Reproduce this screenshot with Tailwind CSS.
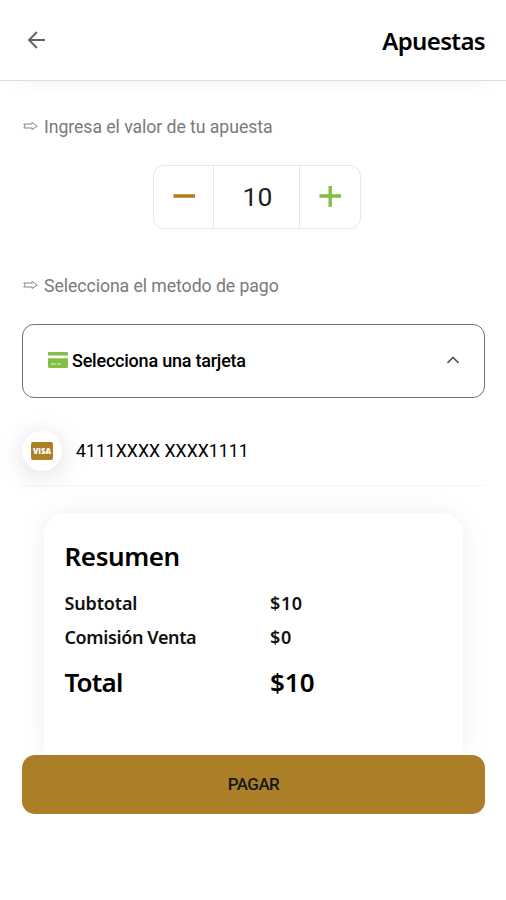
<!DOCTYPE html>
<html lang="es">
<head>
<meta charset="utf-8">
<title>Apuestas</title>
<script src="https://cdn.jsdelivr.net/npm/@tailwindcss/browser@4"></script>
</head>
<body class="bg-white">
<div class="w-[506px] h-[900px] overflow-hidden flex flex-col bg-white font-['Roboto',sans-serif] text-black">
  <header class="relative z-10 h-[81px] shrink-0 bg-white border-b border-[#dedede] flex items-center justify-between pl-[27px] pr-[21px] shadow-[0_14px_22px_-20px_rgba(0,0,0,0.12)]">
    <svg class="w-5 h-5" viewBox="0 0 20 20" fill="none" stroke="#626262" stroke-width="1.9"><path d="M18 10H2.500M10 2L2 10l8 8"/></svg>
    <h1 class="font-['Noto_Sans',sans-serif] font-semibold text-[24px] leading-8 tracking-[-0.650px] pt-px">Apuestas</h1>
  </header>
  <main class="px-[22px] flex flex-col">
    <div class="mt-[34px] h-6 flex items-center text-[17.700px] text-[#7a7a7a] whitespace-nowrap">
      <svg class="w-[15px] h-[12px] ml-px mr-[6px]" viewBox="0 0 15 12" fill="none" stroke="#858585" stroke-width="1" stroke-linejoin="round"><path d="M.7 3h8.300V1.500L14.200 5.200 9 8.500V7H.7l1-1.200V4z"/></svg>
      <span class="tracking-[-0.070px]">Ingresa el valor de tu apuesta</span>
    </div>
    <div class="mt-[26px] ml-[131px] w-[208px] h-[64px] flex border border-[#e8e8e8] rounded-[11px]">
      <div class="w-[60px] flex items-center justify-center border-r border-[#e8e8e8]"><svg class="w-[22px] h-[22px]" viewBox="0 0 22 22" fill="none" stroke="#b07a12" stroke-width="3.400"><path d="M.5 10h21.500"/></svg></div>
      <div class="w-[86px] flex items-center justify-center border-r border-[#e8e8e8] text-[26.500px] text-[#222] pl-[2px]">10</div>
      <div class="w-[60px] flex items-center justify-center"><svg class="w-[22px] h-[22px]" viewBox="0 0 22 22" fill="none" stroke="#84be45" stroke-width="3.400"><path d="M.5 10h21.500M11.200 0v21"/></svg></div>
    </div>
    <div class="mt-[45px] h-6 flex items-center text-[17.700px] text-[#7a7a7a] whitespace-nowrap">
      <svg class="w-[15px] h-[12px] ml-px mr-[6px]" viewBox="0 0 15 12" fill="none" stroke="#858585" stroke-width="1" stroke-linejoin="round"><path d="M.7 3h8.300V1.500L14.200 5.200 9 8.500V7H.7l1-1.200V4z"/></svg>
      <span class="tracking-[-0.070px]">Selecciona el metodo de pago</span>
    </div>
    <div class="mt-[26px] w-[463px] h-[74px] flex items-center border border-[#707070] rounded-[12px] px-[25px] pb-[2px]">
      <svg class="w-[20px] h-[16px] mr-[4px] shrink-0" viewBox="0 0 20 16"><path fill="#84be45" d="M1 0h18a1 1 0 0 1 1 1v2.600H0V1a1 1 0 0 1 1-1zM0 6.200h20V14.500a1.500 1.500 0 0 1-1.500 1.500h-17A1.500 1.500 0 0 1 0 14.500z"/><path stroke="#e1f1cf" stroke-width="1.200" d="M3 12h5M9 12h4"/></svg>
      <span class="font-medium text-[18px] tracking-[-0.220px] whitespace-nowrap">Selecciona una tarjeta</span>
      <svg class="ml-auto w-[12px] h-[8px]" viewBox="0 0 12 8" fill="none" stroke="#555" stroke-width="1.700"><path d="M.5 7L6 1.500 11.500 7"/></svg>
    </div>
    <div class="h-[88px] w-[463px] flex items-center border-b border-[#f3f3f3] pt-[19px]">
      <div class="w-10 h-10 shrink-0 rounded-full bg-white shadow-[0_4px_22px_3px_rgba(0,0,0,0.1)] flex items-center justify-center">
        <svg class="w-[22px] h-[18px]" viewBox="0 0 22 18"><rect width="22" height="18" rx="2" fill="#ab8026"/><text x="11" y="12" text-anchor="middle" font-family="Open Sans, sans-serif" font-size="8" font-weight="800" fill="#fff" textLength="18" lengthAdjust="spacingAndGlyphs">VISA</text></svg>
      </div>
      <span class="ml-[14px] text-[17.700px] whitespace-nowrap">4111XXXX XXXX1111</span>
    </div>
    <section class="mt-[27px] mx-[22px] h-[242px] w-[419px] bg-white rounded-t-[22px] shadow-[0_0_26px_rgba(0,0,0,0.065)] px-[20.500px] pt-[25px] font-['Noto_Sans',sans-serif] font-semibold text-[#111]">
      <h2 class="text-[26px] leading-9 tracking-[-0.400px] text-black">Resumen</h2>
      <div class="mt-[12px] h-[34px] flex items-center text-[18px]"><span class="w-[205.500px] tracking-[-0.150px]">Subtotal</span><span class="tracking-[0.600px]">$10</span></div>
      <div class="h-[34px] flex items-center text-[18px]"><span class="w-[205.500px] tracking-[-0.380px]">Comisión Venta</span><span class="tracking-[0.600px]">$0</span></div>
      <div class="mt-[8px] h-[40px] flex items-center text-[26px] text-black"><span class="w-[205.500px] tracking-[-0.850px]">Total</span><span>$10</span></div>
    </section>
  </main>
  <footer class="relative z-10 grow bg-white px-[22px]">
    <button class="w-[463px] h-[59px] block rounded-[13px] bg-[#aa7f28] text-[17px] tracking-[-0.550px] font-medium text-[#161616]">PAGAR</button>
  </footer>
</div>
</body>
</html>
